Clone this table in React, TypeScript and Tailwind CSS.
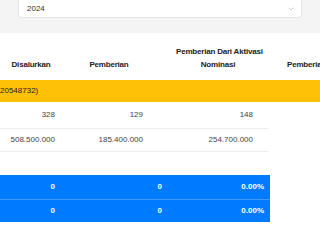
import { ChevronDown } from "lucide-react";

const rows = [
  ["328", "129", "148"],
  ["508.500.000", "185.400.000", "254.700.000"],
];

const summary = [
  ["0", "0", "0.00%"],
  ["0", "0", "0.00%"],
];

const App = () => {
  return (
    <div className="w-[320px] h-[240px] overflow-hidden bg-white font-['Liberation_Sans',Arial,sans-serif]">
      {/* filter bar */}
      <div className="h-[33px] bg-[#f4f4f4] px-[18px]">
        <div className="h-[18px] flex items-center justify-between pl-2 pr-1.5 bg-white border border-t-0 border-[#e4e4e4] rounded-b text-[8px] text-[#333]">
          <span>2024</span>
          <ChevronDown size={8} strokeWidth={1.5} className="text-[#999]" />
        </div>
      </div>

      {/* main table */}
      <div className="flex items-end h-[47px] pb-[9px] text-[8px] font-semibold tracking-[-0.2px] text-[#222] whitespace-nowrap">
        <div className="w-[62px] shrink-0 text-center">Disalurkan</div>
        <div className="w-[90px] shrink-0 text-center pl-1">Pemberian</div>
        <div className="w-[108px] shrink-0 text-center pl-6 leading-[13px]">
          Pemberian Dari Aktivasi
          <br />
          Nominasi
        </div>
        <div className="w-[60px] shrink-0 pl-[27px]">Pemberian</div>
      </div>
      <div className="h-[22px] flex items-center bg-[#ffc107] text-[8px] text-[#222]">
        20548732)
      </div>
      <div className="w-[268px]">
        {rows.map((r, i) => (
          <div
            key={i}
            className={`flex items-center border-b border-[#ececec] text-[8px] text-[#444] ${
              i === 0 ? "h-[27px]" : "h-[23px]"
            }`}
          >
            <div className="w-[62px] text-right pr-[7px]">{r[0]}</div>
            <div className="w-[88px] text-right pr-[7px]">{r[1]}</div>
            <div className="w-[110px] text-right pr-[7px]">{r[2]}</div>
          </div>
        ))}
      </div>

      {/* summary */}
      <div className="mt-[23px] w-[270px] bg-[#007bff]">
        {summary.map((r, i) => (
          <div
            key={i}
            className={`flex items-center text-[8px] font-bold text-white ${
              i === 0 ? "h-[25px] border-b border-[#3d9bff]" : "h-[22px]"
            }`}
          >
            <div className="w-[55px] text-right">{r[0]}</div>
            <div className="w-[107px] text-right">{r[1]}</div>
            <div className="w-[102px] text-right">{r[2]}</div>
          </div>
        ))}
      </div>
    </div>
  );
};

export default App;
